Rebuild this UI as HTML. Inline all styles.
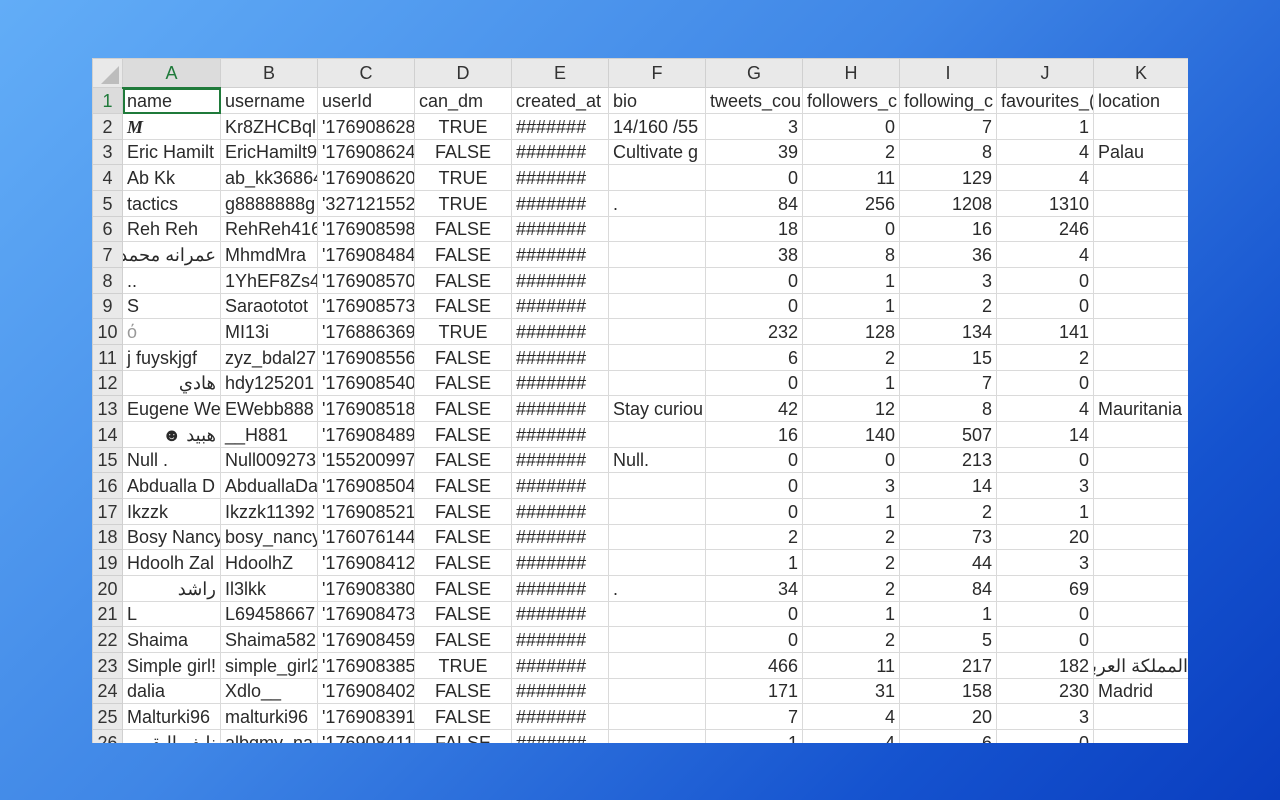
<!DOCTYPE html>
<html><head><meta charset="utf-8"><style>
html,body{margin:0;padding:0;width:1280px;height:800px;overflow:hidden}
body{background:linear-gradient(135deg,#62adf7 0%,#3f86e6 45%,#1553cf 80%,#0a3ec0 100%)}
#sheet{position:absolute;left:92px;top:58px;width:1096px;height:685px;overflow:hidden;background:#fff}
table{width:1096px;border-collapse:collapse;table-layout:fixed;font-family:"Liberation Sans","Noto Sans CJK SC",sans-serif;font-size:18px;color:#2a2a2a}
tr{height:26px}
tr.s{height:25px}
td{border:1px solid #dadada;padding:0 4px;white-space:nowrap;overflow:hidden;text-overflow:clip;line-height:22px}
tr.h{height:29px}
tr.h td{background:#e9e9e9;text-align:center;color:#333;border-color:#d0d0d0;font-size:18px}
td.n{background:#e9e9e9;text-align:center;color:#333;border-color:#d0d0d0;padding:0}
.r{text-align:right}.c{text-align:center}.rtl{text-align:right;direction:rtl}
.sel{color:#1f7a3a!important;background:#dcdcdc!important;border-bottom:2px solid #1f7a3a!important}
.act{outline:2px solid #1f7a3a;outline-offset:-2px}
</style></head><body>
<div id="sheet"><table>
<colgroup><col style="width:30px"><col style="width:98px"><col style="width:97px"><col style="width:97px"><col style="width:97px"><col style="width:97px"><col style="width:97px"><col style="width:97px"><col style="width:97px"><col style="width:97px"><col style="width:97px"><col style="width:95px"></colgroup>
<tr class="h"><td style="position:relative"><div style="position:absolute;right:3px;bottom:3px;width:0;height:0;border-left:18px solid transparent;border-bottom:18px solid #bdbdbd"></div></td><td class="sel">A</td><td>B</td><td>C</td><td>D</td><td>E</td><td>F</td><td>G</td><td>H</td><td>I</td><td>J</td><td>K</td></tr>
<tr><td class="n sel" style="border-bottom:1px solid #d0d0d0!important">1</td><td class="act">name</td><td>username</td><td>userId</td><td>can_dm</td><td>created_at</td><td>bio</td><td>tweets_cou</td><td>followers_c</td><td>following_c</td><td>favourites_(</td><td>location</td></tr>
<tr><td class="n">2</td><td><b><i style="font-family:'Liberation Serif',serif">M</i></b></td><td>Kr8ZHCBql</td><td>'176908628</td><td class="c">TRUE</td><td>#######</td><td>14/160 /55</td><td class="r">3</td><td class="r">0</td><td class="r">7</td><td class="r">1</td><td></td></tr>
<tr class="s"><td class="n">3</td><td>Eric Hamilt</td><td>EricHamilt9</td><td>'176908624</td><td class="c">FALSE</td><td>#######</td><td>Cultivate g</td><td class="r">39</td><td class="r">2</td><td class="r">8</td><td class="r">4</td><td>Palau</td></tr>
<tr><td class="n">4</td><td>Ab Kk</td><td>ab_kk36864</td><td>'176908620</td><td class="c">TRUE</td><td>#######</td><td></td><td class="r">0</td><td class="r">11</td><td class="r">129</td><td class="r">4</td><td></td></tr>
<tr><td class="n">5</td><td>tactics</td><td>g8888888g</td><td>'327121552</td><td class="c">TRUE</td><td>#######</td><td>.</td><td class="r">84</td><td class="r">256</td><td class="r">1208</td><td class="r">1310</td><td></td></tr>
<tr class="s"><td class="n">6</td><td>Reh Reh</td><td>RehReh416</td><td>'176908598</td><td class="c">FALSE</td><td>#######</td><td></td><td class="r">18</td><td class="r">0</td><td class="r">16</td><td class="r">246</td><td></td></tr>
<tr><td class="n">7</td><td class="rtl">عمرانه محمد</td><td>MhmdMra</td><td>'176908484</td><td class="c">FALSE</td><td>#######</td><td></td><td class="r">38</td><td class="r">8</td><td class="r">36</td><td class="r">4</td><td></td></tr>
<tr><td class="n">8</td><td>..</td><td>1YhEF8Zs4</td><td>'176908570</td><td class="c">FALSE</td><td>#######</td><td></td><td class="r">0</td><td class="r">1</td><td class="r">3</td><td class="r">0</td><td></td></tr>
<tr class="s"><td class="n">9</td><td>S</td><td>Saraototot</td><td>'176908573</td><td class="c">FALSE</td><td>#######</td><td></td><td class="r">0</td><td class="r">1</td><td class="r">2</td><td class="r">0</td><td></td></tr>
<tr><td class="n">10</td><td style="color:#999">ό</td><td>MI13i</td><td>'176886369</td><td class="c">TRUE</td><td>#######</td><td></td><td class="r">232</td><td class="r">128</td><td class="r">134</td><td class="r">141</td><td></td></tr>
<tr><td class="n">11</td><td>j fuyskjgf</td><td>zyz_bdal27</td><td>'176908556</td><td class="c">FALSE</td><td>#######</td><td></td><td class="r">6</td><td class="r">2</td><td class="r">15</td><td class="r">2</td><td></td></tr>
<tr class="s"><td class="n">12</td><td class="rtl">هادي</td><td>hdy125201</td><td>'176908540</td><td class="c">FALSE</td><td>#######</td><td></td><td class="r">0</td><td class="r">1</td><td class="r">7</td><td class="r">0</td><td></td></tr>
<tr><td class="n">13</td><td>Eugene We</td><td>EWebb888</td><td>'176908518</td><td class="c">FALSE</td><td>#######</td><td>Stay curiou</td><td class="r">42</td><td class="r">12</td><td class="r">8</td><td class="r">4</td><td>Mauritania</td></tr>
<tr><td class="n">14</td><td class="rtl">هبيد ☻</td><td>__H881</td><td>'176908489</td><td class="c">FALSE</td><td>#######</td><td></td><td class="r">16</td><td class="r">140</td><td class="r">507</td><td class="r">14</td><td></td></tr>
<tr class="s"><td class="n">15</td><td>Null .</td><td>Null009273</td><td>'155200997</td><td class="c">FALSE</td><td>#######</td><td>Null.</td><td class="r">0</td><td class="r">0</td><td class="r">213</td><td class="r">0</td><td></td></tr>
<tr><td class="n">16</td><td>Abdualla D</td><td>AbduallaDa</td><td>'176908504</td><td class="c">FALSE</td><td>#######</td><td></td><td class="r">0</td><td class="r">3</td><td class="r">14</td><td class="r">3</td><td></td></tr>
<tr><td class="n">17</td><td>Ikzzk</td><td>Ikzzk11392</td><td>'176908521</td><td class="c">FALSE</td><td>#######</td><td></td><td class="r">0</td><td class="r">1</td><td class="r">2</td><td class="r">1</td><td></td></tr>
<tr class="s"><td class="n">18</td><td>Bosy Nancy</td><td>bosy_nancy</td><td>'176076144</td><td class="c">FALSE</td><td>#######</td><td></td><td class="r">2</td><td class="r">2</td><td class="r">73</td><td class="r">20</td><td></td></tr>
<tr><td class="n">19</td><td>Hdoolh Zal</td><td>HdoolhZ</td><td>'176908412</td><td class="c">FALSE</td><td>#######</td><td></td><td class="r">1</td><td class="r">2</td><td class="r">44</td><td class="r">3</td><td></td></tr>
<tr><td class="n">20</td><td class="rtl">راشد</td><td>Il3lkk</td><td>'176908380</td><td class="c">FALSE</td><td>#######</td><td>.</td><td class="r">34</td><td class="r">2</td><td class="r">84</td><td class="r">69</td><td></td></tr>
<tr class="s"><td class="n">21</td><td>L</td><td>L69458667</td><td>'176908473</td><td class="c">FALSE</td><td>#######</td><td></td><td class="r">0</td><td class="r">1</td><td class="r">1</td><td class="r">0</td><td></td></tr>
<tr><td class="n">22</td><td>Shaima</td><td>Shaima582</td><td>'176908459</td><td class="c">FALSE</td><td>#######</td><td></td><td class="r">0</td><td class="r">2</td><td class="r">5</td><td class="r">0</td><td></td></tr>
<tr><td class="n">23</td><td>Simple girl!</td><td>simple_girl2</td><td>'176908385</td><td class="c">TRUE</td><td>#######</td><td></td><td class="r">466</td><td class="r">11</td><td class="r">217</td><td class="r">182</td><td class="rtl" style="padding:0">المملكة العربية</td></tr>
<tr class="s"><td class="n">24</td><td>dalia</td><td>Xdlo__</td><td>'176908402</td><td class="c">FALSE</td><td>#######</td><td></td><td class="r">171</td><td class="r">31</td><td class="r">158</td><td class="r">230</td><td>Madrid</td></tr>
<tr><td class="n">25</td><td>Malturki96</td><td>malturki96</td><td>'176908391</td><td class="c">FALSE</td><td>#######</td><td></td><td class="r">7</td><td class="r">4</td><td class="r">20</td><td class="r">3</td><td></td></tr>
<tr><td class="n">26</td><td class="rtl">نايف البقمي</td><td>albqmy_na</td><td>'176908411</td><td class="c">FALSE</td><td>#######</td><td></td><td class="r">1</td><td class="r">4</td><td class="r">6</td><td class="r">0</td><td></td></tr>
</table></div>
</body></html>
